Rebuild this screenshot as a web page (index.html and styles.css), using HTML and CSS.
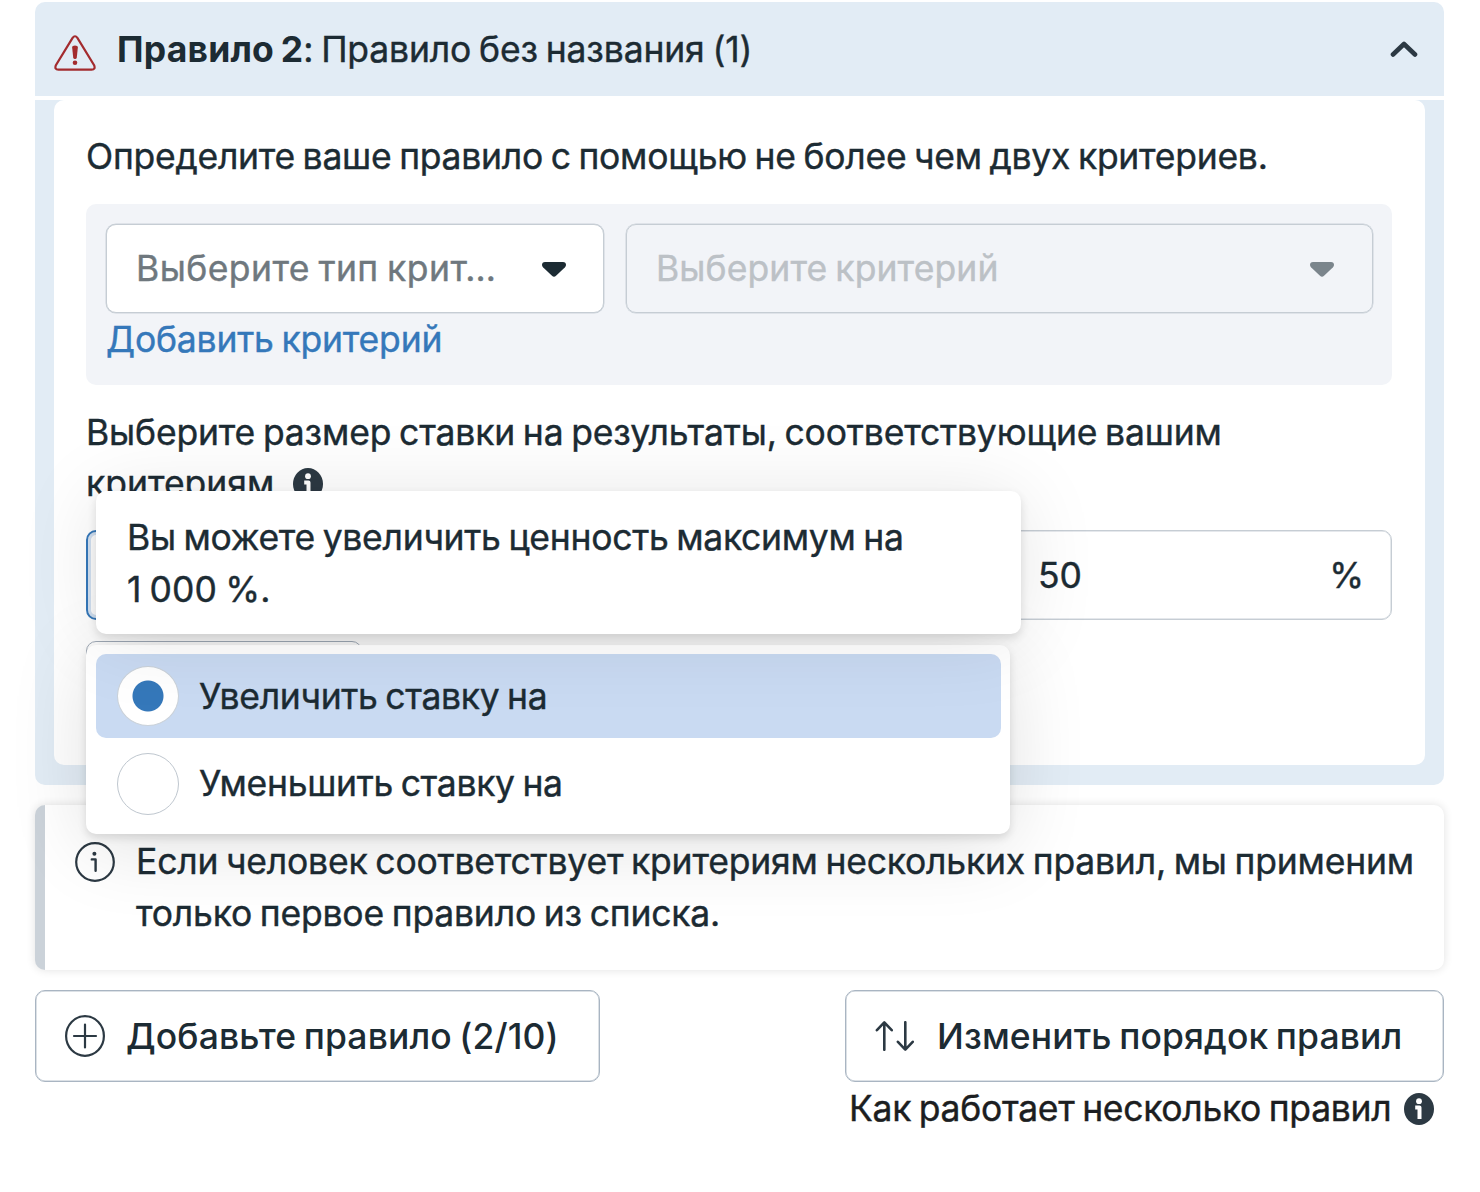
FILE: index.html
```
<!DOCTYPE html>
<html lang="ru">
<head>
    <meta charset="UTF-8">
    <meta name="viewport" content="width=device-width, initial-scale=1.0">
    <title>Правила ставок</title>
    <link rel="stylesheet" href="styles.css">
</head>
<body>

    <!-- Rule panel -->
    <div class="rule-header">
        <svg class="icon-warning" viewBox="0 0 42 36">
            <path d="M18.6 2.9 L1.9 30.2 Q0.2 34.6 4.4 34.6 H37.6 Q41.8 34.6 40.1 30.2 L23.4 2.9 Q21 -0.4 18.6 2.9 Z" fill="none" stroke="#a32b2e" stroke-width="2.2"/>
            <path d="M18.1 12 Q18.2 10.4 21 10.4 Q23.8 10.4 23.9 12 L22.8 22.5 Q22.6 24 21 24 Q19.4 24 19.2 22.5 Z" fill="#a32b2e"/>
            <circle cx="21" cy="27.8" r="2.3" fill="#a32b2e"/>
        </svg>
        <div class="rule-title"><b>Правило 2</b>: Правило без названия (1)</div>
        <svg class="icon-chevron" viewBox="0 0 28 18">
            <path d="M3 14.5 L14 4 L25 14.5" fill="none" stroke="#2c3943" stroke-width="4.6" stroke-linecap="round" stroke-linejoin="round"/>
        </svg>
    </div>
    <div class="rule-body">
        <div class="rule-card">
            <div class="intro">Определите ваше правило с помощью не более чем двух критериев.</div>

            <div class="criteria">
                <div class="criteria-row">
                    <div class="select select-type">
                        <span>Выберите тип крит…</span>
                        <svg class="caret" viewBox="0 0 24 15"><path d="M3 0 H21 Q24 0 24 3 Q24 4.4 22.8 5.6 L14 13.8 Q12 15.6 10 13.8 L1.2 5.6 Q0 4.4 0 3 Q0 0 3 0 Z" fill="#1c2b33"/></svg>
                    </div>
                    <div class="select select-value">
                        <span>Выберите критерий</span>
                        <svg class="caret" viewBox="0 0 24 15"><path d="M3 0 H21 Q24 0 24 3 Q24 4.4 22.8 5.6 L14 13.8 Q12 15.6 10 13.8 L1.2 5.6 Q0 4.4 0 3 Q0 0 3 0 Z" fill="#7b858c"/></svg>
                    </div>
                </div>
                <a class="add-link">Добавить критерий</a>
            </div>

            <div class="bid-label">
                <div>Выберите размер ставки на результаты, соответствующие вашим</div>
                <div class="bid-label-end">
                    <span>критериям</span>
                    <svg class="icon-info" viewBox="0 0 30 32">
                        <ellipse cx="15" cy="16" rx="15" ry="16" fill="#2c3943"/>
                        <circle cx="15" cy="8.2" r="2.9" fill="#fff"/>
                        <path d="M11.2 14.5 H15.5 V26" fill="none" stroke="#fff" stroke-width="4" stroke-linejoin="round"/>
                    </svg>
                </div>
            </div>

            <div class="bid-row">
                <div class="bid-action">
                    <!-- Open dropdown with its hint -->
                    <div class="menu">
                        <div class="option selected">
                            <span class="radio"></span>
                            <span class="option-text">Увеличить ставку на</span>
                        </div>
                        <div class="option">
                            <span class="radio"></span>
                            <span class="option-text">Уменьшить ставку на</span>
                        </div>
                    </div>
                    <div class="tooltip">
                        <div>Вы можете увеличить ценность максимум на</div>
                        <div class="limit">1 000 %.</div>
                    </div>
                </div>
                <div class="bid-value">
                    <span>50</span>
                    <span>%</span>
                </div>
            </div>
            <div class="under-button"></div>
        </div>
    </div>

    <!-- Notice -->
    <div class="notice">
        <svg class="icon-notice" viewBox="0 0 40 40">
            <circle cx="20" cy="20" r="18.8" fill="none" stroke="#2c3943" stroke-width="2.2"/>
            <circle cx="19.4" cy="11.8" r="2" fill="#2c3943"/>
            <path d="M16.8 17.4 H20.6 V28.8" fill="none" stroke="#2c3943" stroke-width="2.4" stroke-linecap="round" stroke-linejoin="round"/>
        </svg>
        <div class="notice-text">
            <div>Если человек соответствует критериям нескольких правил, мы применим</div>
            <div>только первое правило из списка.</div>
        </div>
    </div>

    <!-- Actions -->
    <div class="actions">
        <button class="btn btn-add">
            <svg class="icon-plus" viewBox="0 0 40 42">
                <ellipse cx="20" cy="21" rx="18.9" ry="19.8" fill="none" stroke="#2c3943" stroke-width="2.2"/>
                <path d="M20 9.5 V32.5 M9 21 H31" fill="none" stroke="#2c3943" stroke-width="2.2" stroke-linecap="round"/>
            </svg>
            <span>Добавьте правило (2/10)</span>
        </button>
        <div class="reorder">
            <button class="btn btn-reorder">
                <svg class="icon-sort" viewBox="0 0 40 30">
                    <path d="M9.3 28.8 V1.6 M1.9 9.2 L9.3 1.4 L16.7 9.2 M30.3 1.2 V28.4 M22.9 20.8 L30.3 28.6 L37.7 20.8" fill="none" stroke="#2c3943" stroke-width="2.6" stroke-linecap="round" stroke-linejoin="round"/>
                </svg>
                <span>Изменить порядок правил</span>
            </button>
            <div class="how">
                <span>Как работает несколько правил</span>
                <svg class="icon-info" viewBox="0 0 30 32">
                    <ellipse cx="15" cy="16" rx="15" ry="16" fill="#2c3943"/>
                    <circle cx="15" cy="8.2" r="2.9" fill="#fff"/>
                    <path d="M11.2 14.5 H15.5 V26" fill="none" stroke="#fff" stroke-width="4" stroke-linejoin="round"/>
                </svg>
            </div>
        </div>
    </div>

</body>
</html>
```
FILE: styles.css
```
* {
    box-sizing: border-box;
}
body {
    margin: 0;
    padding: 2px 36px 0 35px;
    background: #fff;
    color: #1c2b33;
    font-family: Inter, "Noto Sans", sans-serif;
    font-size: 35.5px;
    line-height: 51.5px;
    word-spacing: -2px;
    letter-spacing: -0.2px;
    white-space: nowrap;
    -webkit-text-stroke: 0.4px;
}
svg {
    display: block;
    flex: none;
}
.rule-header {
    display: flex;
    align-items: center;
    height: 94px;
    padding: 0 26px 0 19px;
    background: #e2ecf5;
    border-radius: 10px 10px 0 0;
}
.icon-warning {
    width: 42px;
    height: 36px;
    margin-top: 8px;
}
.rule-title {
    flex: 1;
    margin-left: 21px;
    padding-top: 2px;
    letter-spacing: -0.15px;
}
.rule-title b {
    letter-spacing: 0.2px;
    -webkit-text-stroke: 0;
}
.icon-chevron {
    width: 28px;
    height: 18px;
}
.rule-body {
    height: 685px;
    margin-top: 4px;
    padding: 0 19px 20px;
    background: #e2ecf5;
    border-radius: 0 0 10px 10px;
}
.rule-card {
    height: 665px;
    padding: 31px 33px 0 32px;
    background: #fff;
    border-radius: 10px;
}
.intro {
    letter-spacing: -0.26px;
}
.criteria {
    height: 181px;
    margin-top: 21px;
    padding: 20px 19px 0 20px;
    background: #f2f4f8;
    border-radius: 10px;
}
.criteria-row {
    display: grid;
    grid-template-columns: 498px 1fr;
    gap: 22px;
    margin-bottom: 1px;
}
.select {
    display: flex;
    align-items: center;
    justify-content: space-between;
    height: 89px;
    padding: 2px 37px 0 29px;
    border: 1px solid #c6cdd4;
    border-radius: 10px;
    box-shadow: 0 0 0 0.5px #cbd2d9;
    color: #6f787e;
    background: #fff;
}
.select-type {
    letter-spacing: 0.44px;
}
.select-value {
    padding-right: 38px;
    background: transparent;
    color: #bcc1c6;
    letter-spacing: 0.1px;
}
.caret {
    width: 24px;
    height: 15px;
}
.add-link {
    display: block;
    color: #3578ba;
}
.bid-label {
    margin-top: 22px;
    letter-spacing: -0.17px;
}
.bid-label-end {
    display: flex;
    align-items: center;
    gap: 19px;
    letter-spacing: 0;
}
.icon-info {
    width: 30px;
    height: 32px;
}
.bid-row {
    display: flex;
    height: 90px;
    margin-top: 20px;
}
.bid-action {
    position: relative;
    width: 905px;
    border: 2px solid #3578ba;
    border-radius: 10px 0 0 10px;
    box-shadow: inset 0 0 0 3px #d3e1f2;
}
.bid-value {
    display: flex;
    align-items: center;
    justify-content: space-between;
    flex: 1;
    padding: 2px 27px 0 46px;
    border: 1px solid #c6cdd4;
    border-radius: 0 10px 10px 0;
    box-shadow: inset 0 0 0 0.5px #cbd2d9;
    letter-spacing: 0;
}
.under-button {
    width: 276px;
    height: 80px;
    margin-top: 21px;
    border: 1px solid #a3adba;
    border-radius: 10px;
}
.menu {
    position: absolute;
    top: 113px;
    left: -2px;
    width: 924px;
    height: 189px;
    padding: 9px 9px 0 10px;
    background: #fff;
    border-radius: 10px;
    box-shadow: 0 4px 8px rgba(0, 0, 0, 0.12), 0 12px 80px rgba(0, 0, 0, 0.12);
}
.option {
    display: flex;
    align-items: center;
    gap: 20px;
    height: 84px;
    margin-bottom: 4px;
    padding-left: 21px;
    border-radius: 10px;
    letter-spacing: -0.32px;
}
.option.selected {
    background: #c9daf2;
}
.option.selected .option-text {
    padding-top: 2px;
}
.radio {
    width: 62px;
    height: 62px;
    background: #fff;
    border: 1px solid #bfc7cf;
    border-radius: 50%;
}
.selected .radio {
    height: 60px;
    border-color: #cbd2d9;
    background: radial-gradient(circle, #3578ba 15px, #fff 16px);
}
.tooltip {
    position: absolute;
    top: -41px;
    left: 8px;
    width: 925px;
    height: 143px;
    padding: 21px 31px;
    background: #fff;
    border-radius: 10px;
    box-shadow: 0 4px 10px rgba(0, 0, 0, 0.12), 0 4px 80px rgba(0, 0, 0, 0.1);
    letter-spacing: -0.28px;
}
.limit {
    padding-top: 1px;
    letter-spacing: 0.1px;
}
.notice {
    display: flex;
    height: 165px;
    margin-top: 20px;
    padding: 31px 0 0 30px;
    background: #fff;
    border-left: 10px solid #cbd2d9;
    border-radius: 10px;
    box-shadow: 0 0 10px rgba(0, 0, 0, 0.12);
}
.icon-notice {
    width: 40px;
    height: 40px;
    margin-top: 6px;
}
.notice-text {
    margin-left: 21px;
}
.actions {
    display: flex;
    justify-content: space-between;
    margin-top: 20px;
}
.btn {
    display: flex;
    align-items: center;
    height: 92px;
    padding: 0 0 0 29px;
    background: #fff;
    border: 1px solid #a9b5c2;
    border-radius: 10px;
    box-shadow: inset 0 0 0 0.5px #b9c3cd;
    color: #1c2b33;
    font-family: inherit;
    font-size: inherit;
    font-weight: 500;
    word-spacing: -2px;
    letter-spacing: 0.1px;
    -webkit-text-stroke: 0;
}
.btn span {
    padding-top: 1px;
}
.btn-add {
    width: 565px;
    gap: 21px;
}
.btn-reorder {
    width: 599px;
    gap: 22px;
}
.icon-plus {
    width: 40px;
    height: 42px;
}
.icon-sort {
    width: 40px;
    height: 30px;
}
.how {
    display: flex;
    align-items: center;
    justify-content: space-between;
    padding: 1px 10px 0 4px;
    color: #1c1e21;
    letter-spacing: -0.3px;
}
```
